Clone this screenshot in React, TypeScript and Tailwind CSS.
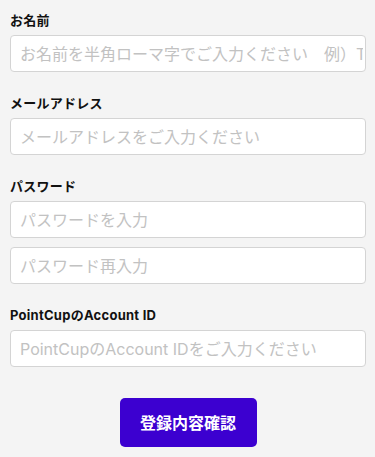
const font = { fontFamily: 'Inter, "Noto Sans CJK JP", sans-serif' };

type Field = {
  label: string;
  placeholders: string[];
  type?: string;
};

const fields: Field[] = [
  { label: "お名前", placeholders: ["お名前を半角ローマ字でご入力ください　例）Taro Yamada"] },
  { label: "メールアドレス", placeholders: ["メールアドレスをご入力ください"], type: "email" },
  { label: "パスワード", placeholders: ["パスワードを入力", "パスワード再入力"], type: "password" },
  { label: "PointCupのAccount ID", placeholders: ["PointCupのAccount IDをご入力ください"] }
];

export default function App() {
  return (
    <div className="min-h-[457px] w-full bg-[#f4f4f4] pl-[10px] pr-[9px] pt-[10px]" style={font}>
      <form className="flex flex-col">
        {fields.map((field, i) => (
          <div key={field.label} className={i === 0 ? "" : "mt-[21px]"}>
            <label className="mb-[5px] block text-[13px] font-bold leading-[20px] tracking-[0.02em] text-[#111]">{field.label}</label>
            <div className="flex flex-col gap-[9px]">
              {field.placeholders.map((ph) => (
                <input
                  key={ph}
                  type={field.type ?? "text"}
                  placeholder={ph}
                  className="h-[37px] w-full rounded-[4px] border border-[#d4d4d4] bg-white pl-[9px] pr-[2px] text-[16px] text-[#333] outline-none placeholder:text-[#c2c2c2]"
                  style={font}
                />
              ))}
            </div>
          </div>
        ))}

        <div className="mt-[31px] flex justify-center">
          <button
            type="button"
            className="h-[49px] w-[137px] rounded-[5px] bg-[#3c00d0] text-[16px] font-bold text-white"
            style={font}
          >
            登録内容確認
          </button>
        </div>
      </form>
    </div>
  );
}
